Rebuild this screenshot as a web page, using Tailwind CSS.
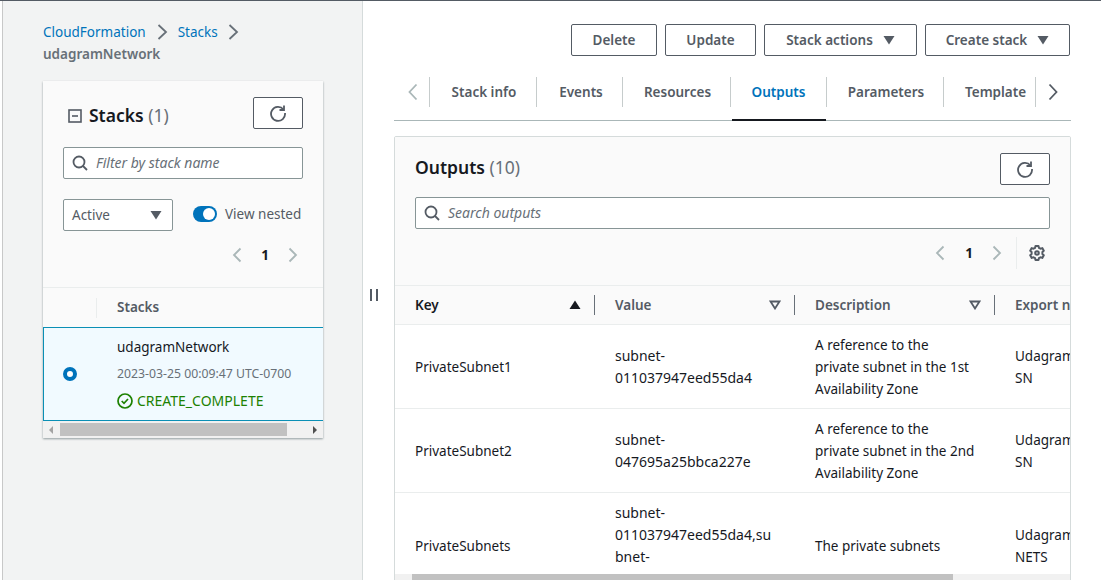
<!DOCTYPE html>
<html lang="en">
<head>
    <meta charset="UTF-8">
    <title>CloudFormation Stacks</title>
    <script src="https://cdn.jsdelivr.net/npm/@tailwindcss/browser@4"></script>
</head>
<body class="w-[1101px] h-[580px] overflow-hidden bg-white text-[13.5px] leading-[22px] text-[#16191f] font-['Noto_Sans','Open_Sans',sans-serif]">
    <div class="h-px bg-[#545b64]"></div>
    <div class="flex h-[579px]">
        <div class="w-[3px] border-r border-[#c8c8c8]"></div>

        <!-- left pane -->
        <div class="w-[360px] shrink-0 bg-[#f2f3f3] border-r border-[#d5dbdb] pl-[40px] pt-[20px]">
            <div class="flex items-center h-[22px]">
                <span class="text-[#0073bb]">CloudFormation</span>
                <svg class="ml-[10px] mr-[9px]" width="13" height="18" viewBox="0 0 13 18" fill="none" stroke="#687078" stroke-width="1.8"><path d="M2.500 2 10 9l-7.500 7"/></svg>
                <span class="text-[#0073bb]">Stacks</span>
                <svg class="ml-[9px]" width="13" height="18" viewBox="0 0 13 18" fill="none" stroke="#687078" stroke-width="1.8"><path d="M2.500 2 10 9l-7.500 7"/></svg>
            </div>
            <div class="font-semibold text-[#687078]">udagramNetwork</div>

            <div class="w-[280px] h-[357px] mt-[16px] bg-[#fafafa] shadow-[0_1px_2px_rgba(0,28,36,0.4)] flex flex-col overflow-hidden">
                <div class="h-[206px] shrink-0 px-[20px] pt-[16px]">
                    <div class="flex items-center justify-between h-[32px]">
                        <div class="flex items-center pl-[5px] mt-[4px]">
                            <svg class="mr-[7px] mt-[2px]" width="14" height="14" viewBox="0 0 14 14" fill="none" stroke="#545b64" stroke-width="1.6"><rect x="1" y="1" width="12" height="12"/><path d="M4 7h6"/></svg>
                            <span class="text-[17.5px] font-semibold">Stacks <span class="font-normal text-[#687078]">(1)</span></span>
                        </div>
                        <div class="w-[50px] h-[32px] border border-[#545b64] rounded-[2px] bg-white flex items-center justify-center">
                            <svg width="18" height="18" viewBox="0 0 18 18" fill="none" stroke="#545b64" stroke-width="1.8"><path d="M14.500 5.500A7 7 0 1 0 16 9"/><path d="M15 1.500v4.500h-4.500"/></svg>
                        </div>
                    </div>
                    <div class="mt-[18px] h-[32px] border border-[#879596] rounded-[2px] bg-white flex items-center pl-[8px]">
                        <svg width="16" height="16" viewBox="0 0 16 16" fill="none" stroke="#545b64" stroke-width="1.800"><circle cx="7" cy="7" r="5.500"/><path d="m11 11 4 4"/></svg>
                        <span class="ml-[8px] italic text-[14px] text-[#687078]">Filter by stack name</span>
                    </div>
                    <div class="flex items-center mt-[20px]">
                        <div class="w-[110px] h-[32px] border border-[#879596] rounded-[2px] bg-white flex items-center justify-between pl-[8px] pr-[10px] text-[#545b64]">
                            Active
                            <svg width="12" height="10" viewBox="0 0 12 10" fill="#545b64"><path d="M0.500 1h11L6 9.500z"/></svg>
                        </div>
                        <div class="ml-[20px] w-[24px] h-[16px] rounded-full bg-[#0073bb] relative -mt-[2px]">
                            <div class="absolute right-[2px] top-[2px] w-[12px] h-[12px] rounded-full bg-white"></div>
                        </div>
                        <span class="ml-[8px] text-[#545b64] whitespace-nowrap -mt-[2px]">View nested</span>
                    </div>
                    <div class="flex items-center justify-end mt-[13px] pr-[4px] h-[22px]">
                        <svg width="12" height="16" viewBox="0 0 12 16" fill="none" stroke="#aab7b8" stroke-width="1.800"><path d="M9.500 1.500 3 8l6.500 6.500"/></svg>
                        <span class="mx-[18px] font-bold text-[#16191f]">1</span>
                        <svg width="12" height="16" viewBox="0 0 12 16" fill="none" stroke="#aab7b8" stroke-width="1.800"><path d="M2.500 1.500 9 8l-6.500 6.500"/></svg>
                    </div>
                </div>
                <div class="h-[40px] shrink-0 border-t border-[#eaeded] flex items-center">
                    <div class="w-[54px] h-[20px] border-r border-[#eaeded]"></div>
                    <span class="ml-[20px] font-semibold text-[#545b64] -mt-[1px]">Stacks</span>
                </div>
                <div class="h-[94px] shrink-0 border border-[#0a8fb5] border-r-0 bg-[#f1faff] flex items-center relative">
                    <div class="w-[14px] h-[14px] rounded-full border-[4px] border-[#0073bb] bg-white ml-[19px]"></div>
                    <div class="ml-[40px] -mt-[1px] whitespace-nowrap">
                        <div class="text-[#16191f]">udagramNetwork</div>
                        <div class="text-[12.25px] text-[#687078] mt-[5px]">2023-03-25 00:09:47 UTC-0700</div>
                        <div class="flex items-center text-[14px] text-[#1d8102] mt-[5px]">
                            <svg class="mr-[4px]" width="16" height="16" viewBox="0 0 16 16" fill="none" stroke="#1d8102" stroke-width="1.700"><circle cx="8" cy="8" r="7"/><path d="m4.700 8 2.300 2.300 4-4.300"/></svg>
                            CREATE_COMPLETE
                        </div>
                    </div>
                </div>
                <div class="h-[17px] bg-[#f1f1f1] flex items-center">
                    <svg class="ml-[5px]" width="6" height="10" viewBox="0 0 6 10" fill="#a3a3a3"><path d="M5 1v8L1 5z"/></svg>
                    <div class="ml-[6px] w-[227px] h-[13px] bg-[#c1c1c1]"></div>
                    <svg class="ml-[25px]" width="6" height="10" viewBox="0 0 6 10" fill="#505050"><path d="M1 1v8l4-4z"/></svg>
                </div>
            </div>
        </div>

        <!-- resize handle -->
        <div class="w-[31px] shrink-0 flex justify-center pt-[288px]">
            <div class="w-[8px] h-[12px] border-x-2 border-[#545b64] ml-[-10px]"></div>
        </div>

        <!-- right pane -->
        <div class="w-[677px] shrink-0 pt-[23px]">
            <div class="flex justify-end gap-[8px] pr-[1px] font-semibold text-[#545b64]">
                <div class="w-[86px] h-[32px] border border-[#545b64] rounded-[2px] flex items-center justify-center">Delete</div>
                <div class="w-[91px] h-[32px] border border-[#545b64] rounded-[2px] flex items-center justify-center">Update</div>
                <div class="w-[153px] h-[32px] border border-[#545b64] rounded-[2px] flex items-center justify-center gap-[10px]">Stack actions
                    <svg width="12" height="10" viewBox="0 0 12 10" fill="#545b64"><path d="M0.500 1h11L6 9.500z"/></svg>
                </div>
                <div class="w-[145px] h-[32px] border border-[#545b64] rounded-[2px] flex items-center justify-center gap-[10px]">Create stack
                    <svg width="12" height="10" viewBox="0 0 12 10" fill="#545b64"><path d="M0.500 1h11L6 9.500z"/></svg>
                </div>
            </div>

            <div class="mt-[21px] h-[44px] border-b border-[#aab7b8] flex items-start font-semibold text-[#545b64] relative">
                <div class="w-[36px] h-[30px] flex items-center pl-[13px] border-r border-[#c6cccc]">
                    <svg width="12" height="18" viewBox="0 0 12 18" fill="none" stroke="#aab7b8" stroke-width="1.800"><path d="M9.500 1.500 2.500 9l7 7.500"/></svg>
                </div>
                <div class="w-[107px] h-[30px] flex items-center justify-center pl-[2px] border-r border-[#c6cccc] whitespace-nowrap">Stack info</div>
                <div class="w-[86px] h-[30px] flex items-center justify-center pl-[3px] border-r border-[#c6cccc] whitespace-nowrap">Events</div>
                <div class="w-[108px] h-[30px] flex items-center justify-center pl-[2px] border-r border-[#c6cccc] whitespace-nowrap">Resources</div>
                <div class="w-[96px] h-[30px] flex items-center justify-center border-r border-[#c6cccc] text-[#0073bb] whitespace-nowrap">Outputs</div>
                <div class="w-[117px] h-[30px] flex items-center justify-center pl-[2px] border-r border-[#c6cccc] whitespace-nowrap">Parameters</div>
                <div class="w-[92px] h-[30px] flex items-center pl-[21px] border-r border-[#c6cccc] whitespace-nowrap">Template</div>
                <div class="h-[30px] flex items-center pl-[11px]">
                    <svg width="12" height="18" viewBox="0 0 12 18" fill="none" stroke="#545b64" stroke-width="1.800"><path d="M2.500 1.500 9.500 9l-7 7.500"/></svg>
                </div>
                <div class="absolute left-[338px] bottom-[-1px] w-[94px] h-[2px] bg-[#16191f]"></div>
            </div>

            <div class="mt-[15px] h-[460px] bg-white border border-[#d5dbdb] rounded-t-[2px] overflow-hidden relative">
                <div class="h-[149px] bg-[#fafafa] border-b border-[#eaeded] px-[20px] pt-[16px]">
                    <div class="flex items-center justify-between h-[32px]">
                        <span class="text-[17.5px] font-semibold -mt-[4px]">Outputs <span class="font-normal text-[#687078]">(10)</span></span>
                        <div class="w-[50px] h-[32px] border border-[#545b64] rounded-[2px] bg-white flex items-center justify-center">
                            <svg width="18" height="18" viewBox="0 0 18 18" fill="none" stroke="#545b64" stroke-width="1.8"><path d="M14.500 5.500A7 7 0 1 0 16 9"/><path d="M15 1.500v4.500h-4.500"/></svg>
                        </div>
                    </div>
                    <div class="mt-[12px] h-[32px] border border-[#879596] rounded-[2px] bg-white flex items-center pl-[8px]">
                        <svg width="16" height="16" viewBox="0 0 16 16" fill="none" stroke="#545b64" stroke-width="1.800"><circle cx="7" cy="7" r="5.500"/><path d="m11 11 4 4"/></svg>
                        <span class="ml-[8px] italic text-[14px] text-[#687078]">Search outputs</span>
                    </div>
                    <div class="flex items-center justify-end mt-[8px] h-[32px]">
                        <svg width="12" height="16" viewBox="0 0 12 16" fill="none" stroke="#aab7b8" stroke-width="1.800"><path d="M9.500 1.500 3 8l6.500 6.500"/></svg>
                        <span class="mx-[19px] font-bold">1</span>
                        <svg class="-ml-[1px]" width="12" height="16" viewBox="0 0 12 16" fill="none" stroke="#aab7b8" stroke-width="1.800"><path d="M2.500 1.500 9 8l-6.500 6.500"/></svg>
                        <div class="w-px h-[32px] bg-[#eaeded] ml-[13px] mr-[11px]"></div>
                        <svg class="mr-[4px]" width="18" height="18" viewBox="0 0 18 18" fill="none" stroke="#545b64" stroke-width="2" stroke-linejoin="round"><path d="M7.500 2h3l.4 1.800 1.600.9 1.800-.6 1.500 2.600-1.400 1.300v2l1.400 1.300-1.500 2.600-1.800-.6-1.600.9-.4 1.800h-3l-.4-1.800-1.600-.9-1.800.6-1.500-2.600L3.600 10V8L2.200 6.700l1.500-2.600 1.800.6 1.600-.9z"/><circle cx="9" cy="9" r="1.800"/></svg>
                    </div>
                </div>

                <div class="w-[820px]">
                    <div class="h-[39px] flex items-center bg-[#fafafa] border-b border-[#eaeded] font-semibold text-[#545b64]">
                        <div class="w-[200px] h-[20px] pl-[20px] pr-[13px] flex items-center justify-between border-r border-[#687078] text-[#16191f]">Key
                            <svg width="12" height="10" viewBox="0 0 12 10" fill="#16191f"><path d="M0.500 9h11L6 .5z"/></svg>
                        </div>
                        <div class="w-[200px] h-[20px] pl-[20px] pr-[13px] flex items-center justify-between border-r border-[#687078]">Value
                            <svg width="12" height="10" viewBox="0 0 12 10" fill="none" stroke="#545b64" stroke-width="1.800"><path d="M1.500 1.500h9L6 8.500z"/></svg>
                        </div>
                        <div class="w-[200px] h-[20px] pl-[20px] pr-[13px] flex items-center justify-between border-r border-[#687078]">Description
                            <svg width="12" height="10" viewBox="0 0 12 10" fill="none" stroke="#545b64" stroke-width="1.800"><path d="M1.500 1.500h9L6 8.500z"/></svg>
                        </div>
                        <div class="w-[200px] h-[20px] pl-[20px] flex items-center whitespace-nowrap">Export name</div>
                    </div>

                    <div class="h-[84px] flex items-center border-b border-[#eaeded]">
                        <div class="w-[200px] pl-[20px]">PrivateSubnet1</div>
                        <div class="w-[200px] pl-[20px] pr-[20px] text-[14px]">subnet-<br>011037947eed55da4</div>
                        <div class="w-[200px] pl-[20px] pr-[20px]">A reference to the private subnet in the 1st Availability Zone</div>
                        <div class="w-[200px] pl-[20px]">UdagramNetwork<br>SN</div>
                    </div>
                    <div class="h-[84px] flex items-center border-b border-[#eaeded]">
                        <div class="w-[200px] pl-[20px]">PrivateSubnet2</div>
                        <div class="w-[200px] pl-[20px] pr-[20px] text-[14px]">subnet-<br>047695a25bbca227e</div>
                        <div class="w-[200px] pl-[20px] pr-[20px]">A reference to the private subnet in the 2nd Availability Zone</div>
                        <div class="w-[200px] pl-[20px]">UdagramNetwork<br>SN</div>
                    </div>
                    <div class="h-[106px] flex items-center">
                        <div class="w-[200px] pl-[20px]">PrivateSubnets</div>
                        <div class="w-[200px] pl-[20px] pr-[20px] text-[14px] whitespace-nowrap">subnet-<br>011037947eed55da4,su<br>bnet-<br>&nbsp;</div>
                        <div class="w-[200px] pl-[20px] pr-[20px]">The private subnets</div>
                        <div class="w-[200px] pl-[20px]">UdagramNetwork<br>NETS</div>
                    </div>
                </div>

                <div class="absolute left-0 right-0 top-[437px] h-[8px] bg-[#f1f1f1]">
                    <div class="ml-[17px] w-[541px] h-full bg-[#c1c1c1]"></div>
                </div>
            </div>
        </div>
    </div>
</body>
</html>
